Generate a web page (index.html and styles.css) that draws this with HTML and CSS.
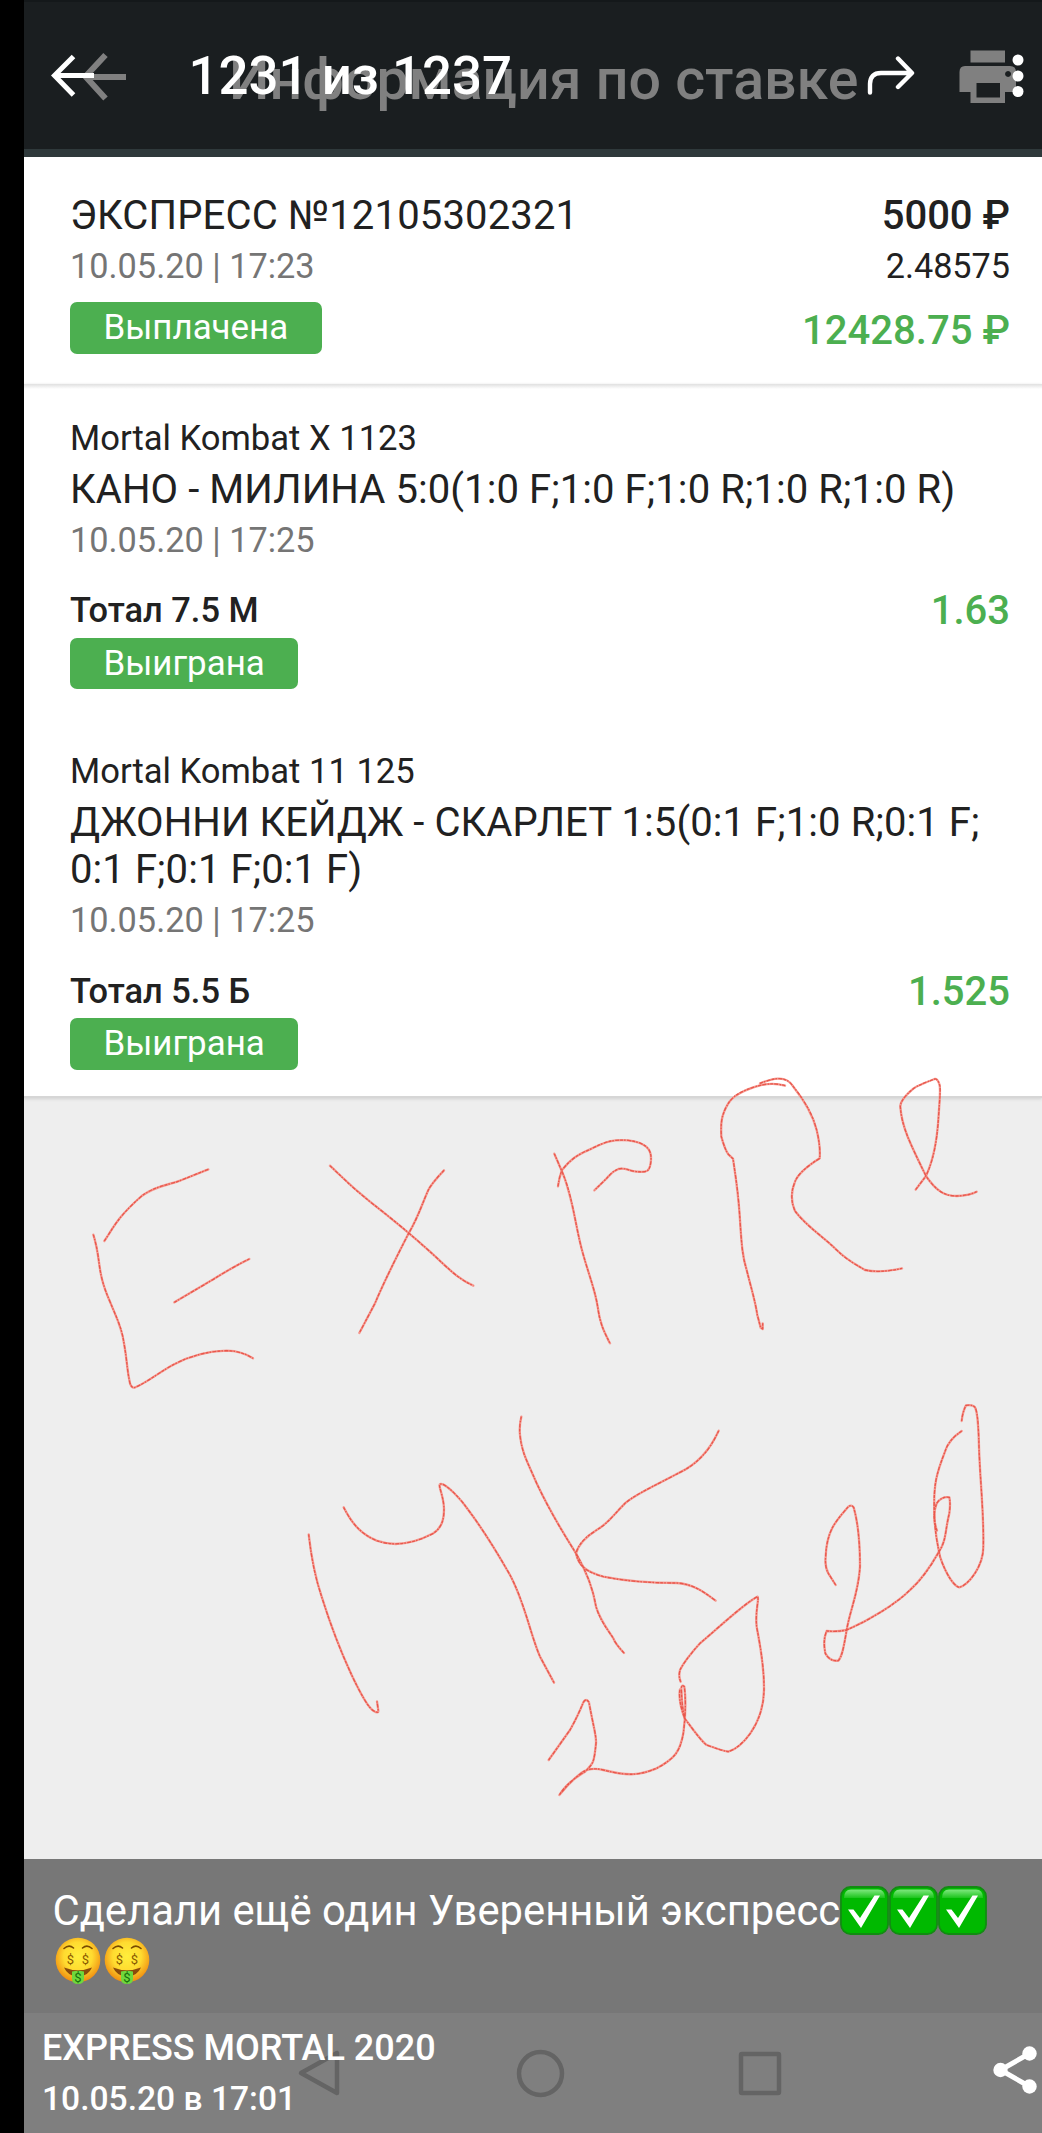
FILE: index.html
```html
<!DOCTYPE html>
<html lang="ru">
<head>
<meta charset="utf-8">
<title>1231 из 1237</title>
<link rel="stylesheet" href="styles.css">
</head>
<body>
<main class="viewer">
  <header class="topbar">
    <div class="layer layer-dim">
      <svg class="back-dim" width="46" height="50" viewBox="0 0 46 50"><path d="M45 25H5M24.500 3L4.500 24.500L24.500 46.500"/></svg>
      <h2 class="title-dim">Информация по ставке</h2>
      <svg class="printer" width="58" height="54" viewBox="0 0 58 54"><path fill-rule="evenodd" d="M11.500.500h34.500v12H11.500zM6 16h45q6 0 6 6v20H46v11H11.500V42H.500V22q0-6 5.500-6zM17.500 33v14.500h23.500V33zM49 21a3 3 0 1 0 .1 0z"/></svg>
    </div>
    <div class="layer layer-front">
      <svg class="back" width="44" height="44" viewBox="0 0 44 44"><path d="M43 21.500H4M22.500 2.500L3.500 21.500L22.500 41"/></svg>
      <h1 class="counter">1231 из 1237</h1>
      <svg class="forward" width="48" height="42" viewBox="0 0 48 42"><path d="M3 37.500V29Q3 18 14 18H44M31 3.500L45 18L31 32"/></svg>
      <svg class="dots" width="12" height="44" viewBox="0 0 12 44"><circle cx="6" cy="6" r="5.500"/><circle cx="6" cy="22" r="5.500"/><circle cx="6" cy="37.500" r="5.500"/></svg>
    </div>
  </header>

  <section class="bet">
    <div class="col">
      <div class="number">ЭКСПРЕСС №12105302321</div>
      <div class="date">10.05.20 | 17:23</div>
      <div class="badge">Выплачена</div>
    </div>
    <div class="col col-right">
      <div class="stake">5000 ₽</div>
      <div class="coef">2.48575</div>
      <div class="payout">12428.75 ₽</div>
    </div>
  </section>

  <section class="events">
    <article class="event">
      <div class="league">Mortal Kombat X 1123</div>
      <div class="match">КАНО - МИЛИНА 5:0(1:0 F;1:0 F;1:0 R;1:0 R;1:0 R)</div>
      <div class="date">10.05.20 | 17:25</div>
      <div class="pick"><span class="pick-name">Тотал 7.5 М</span><span class="odd">1.63</span></div>
      <div class="badge">Выиграна</div>
    </article>
    <article class="event">
      <div class="league">Mortal Kombat 11 125</div>
      <div class="match">ДЖОННИ КЕЙДЖ - СКАРЛЕТ 1:5(0:1 F;1:0 R;0:1 F;<br>0:1 F;0:1 F;0:1 F)</div>
      <div class="date">10.05.20 | 17:25</div>
      <div class="pick"><span class="pick-name">Тотал 5.5 Б</span><span class="odd">1.525</span></div>
      <div class="badge">Выиграна</div>
    </article>
  </section>

  <div class="blank"></div>

  <section class="caption">
    <div class="caption-row">
      <span>Сделали ещё один Уверенный экспресс</span>
      <svg width="49" height="49" viewBox="0 0 49 49">
        <defs>
          <linearGradient id="gloss" x1="0" y1="0" x2="0" y2="1"><stop offset="0" stop-color="#7fe87f"/><stop offset="1" stop-color="#1cc41c"/></linearGradient>
          <symbol id="check" viewBox="0 0 49 49">
            <rect x="1" y="1" width="47" height="47" rx="9.500" fill="#00b900" stroke="#128c12" stroke-width="1.800"/>
            <path d="M4 12Q4 3.500 11 3.500H38Q45 3.500 45 12Z" fill="url(#gloss)"/>
            <path d="M8 23.500H13.500L20 32L34.500 9.500H40L21 42Z" fill="#fff"/>
          </symbol>
        </defs>
        <use href="#check"/>
      </svg>
      <svg width="49" height="49"><use href="#check"/></svg>
      <svg width="49" height="49"><use href="#check"/></svg>
    </div>
    <div class="caption-row">
      <svg width="49" height="49" viewBox="0 0 49 49">
        <defs>
          <radialGradient id="skin" cx=".5" cy=".42" r=".58"><stop offset="0" stop-color="#ffee3c"/><stop offset=".55" stop-color="#ffdb30"/><stop offset="1" stop-color="#f08c10"/></radialGradient>
          <symbol id="money" viewBox="0 0 49 49">
            <circle cx="25" cy="24" r="22.300" fill="url(#skin)"/>
            <path d="M11 12.500Q16 8 20.500 12M29.500 12Q34 8 39 12.500" fill="none" stroke="#7a4a00" stroke-width="1.600" stroke-linecap="round"/>
            <path d="M11 31.500Q25 37 39 31.500Q35 40.500 25 40.500Q15 40.500 11 31.500Z" fill="#8a4a0c"/>
            <path d="M19 35.500Q25 34 31 35.500V43Q31 48 25 48Q19 48 19 43Z" fill="#6fd83c"/>
            <g class="dollar"><text x="17.500" y="27.500">$</text><text x="32.500" y="27.500">$</text><text x="25" y="46" fill="#14700c">$</text></g>
          </symbol>
        </defs>
        <use href="#money"/>
      </svg>
      <svg width="49" height="49"><use href="#money"/></svg>
    </div>
  </section>

  <footer class="footer">
    <svg class="nav" width="490" height="54" viewBox="0 0 490 54">
      <path d="M44 7V47L8 27Z"/><circle cx="247.500" cy="27.500" r="21.500"/><rect x="448" y="8" width="38" height="39" rx="1"/>
    </svg>
    <div class="meta">
      <div class="author">EXPRESS MORTAL 2020</div>
      <div class="time">10.05.20 в 17:01</div>
    </div>
    <svg class="share" width="44" height="48" viewBox="0 0 44 48"><path d="M36.500 7.500L7.500 24L36.500 40.500"/><circle cx="7.500" cy="24" r="7.200"/><circle cx="36.500" cy="7.500" r="7.200"/><circle cx="36.500" cy="40.500" r="7.200"/></svg>
  </footer>

  <svg class="scribble" width="1018" height="760" viewBox="24 1060 1018 760">
    <defs>
      <g id="ink">
        <g transform="translate(60 1060) scale(.33333)">
          <path d="M133 543C165 495 175 470 245 408C290 375 330 375 365 360L445 328"/>
          <path d="M100 524C125 605 108 630 150 725C170 775 185 800 192 850C202 905 200 925 210 970Q216 988 228 981C265 965 300 935 340 914C395 885 450 873 500 872Q545 873 579 895"/>
          <path d="M343 727L460 658Q520 620 568 597"/>
          <path d="M810 317C850 355 870 377 930 425C1000 480 1040 512 1110 575C1160 620 1190 655 1240 677"/>
          <path d="M1152 331Q1115 370 1105 390C1085 435 1075 470 1046 520C1005 600 970 670 945 730L898 819"/>
        </g>
        <g transform="translate(540 1060) scale(.33333)">
          <path d="M43 281L64 330C100 410 105 500 130 585C150 655 165 690 173 740C180 795 195 820 210 850"/>
          <path d="M54 379Q58 350 66 330C90 300 110 285 150 268C200 243 220 238 265 241C315 248 335 265 333 300C330 340 318 336 290 335C265 332 255 322 235 327C215 335 210 345 195 360L163 391"/>
          <path d="M735 77Q700 67 660 76C610 90 580 105 565 130C540 170 543 200 544 230Q555 270 565 283L579 296C590 370 595 400 600 480C605 560 608 590 620 630C635 690 645 720 652 765L662 803L668 807V790"/>
          <path d="M660 70Q700 55 715 56Q745 55 760 80C800 130 820 170 830 210Q842 260 839 295C800 320 775 340 765 365C750 400 755 430 765 453C800 500 850 530 890 570C920 600 950 615 975 630Q1020 640 1086 625"/>
          <path d="M1127 389Q1145 365 1158 348C1180 300 1190 250 1195 180C1200 100 1203 85 1198 72Q1192 55 1184 57C1150 70 1130 78 1120 86Q1080 120 1081 140C1085 200 1110 250 1158 348C1190 395 1215 408 1250 408Q1290 406 1310 395"/>
        </g>
        <g transform="translate(280 1380) scale(.33333)">
          <path d="M86 463C95 540 105 590 125 650C150 730 180 810 215 885Q260 980 280 992Q296 1002 295 992L291 964"/>
          <path d="M191 382C220 440 250 465 290 482C340 500 400 492 460 460C490 440 492 410 492 385C490 340 470 312 483 312C500 312 545 360 565 390C610 450 650 515 690 585C735 670 750 760 780 830L822 908"/>
          <path d="M724 110Q717 140 720 165C725 220 745 250 770 310C810 395 850 460 888 520C920 575 940 630 948 680C960 720 980 745 1000 775Q1005 790 1032 819"/>
          <path d="M1316 152C1290 210 1255 250 1200 277C1130 315 1070 340 1035 370C1000 405 985 430 950 450C910 475 895 495 888 520C895 555 915 575 970 590C1030 602 1100 609 1190 609C1240 612 1270 635 1307 662"/>
          <path d="M806 1140L870 1050Q895 1005 910 967Q918 953 927 967C940 1040 950 1070 948 1090C942 1150 940 1150 915 1175C890 1190 860 1210 838 1245Q870 1205 905 1178Q930 1160 970 1170C1050 1190 1080 1185 1130 1165C1185 1135 1200 1115 1210 1060C1218 1000 1217 950 1213 920Q1205 912 1204 925Q1206 985 1214 1015"/>
          <path d="M1202 905Q1195 890 1200 870Q1215 840 1260 790C1330 730 1400 665 1433 650C1438 660 1425 690 1430 740C1435 770 1453 850 1452 930C1450 1040 1380 1105 1345 1115Q1330 1113 1280 1095C1265 1085 1240 1050 1214 1015Q1194 960 1200 928"/>
        </g>
        <g transform="translate(680 1380) scale(.33333)">
          <path d="M467 615L445 580Q434 560 437 530C440 450 470 420 505 380Q515 373 521 382C535 430 540 500 540 560C535 640 510 690 500 750C490 810 485 830 475 842Q450 845 436 820Q428 780 440 753Q470 756 500 750C570 720 650 670 690 630C730 595 760 545 777 515C800 480 795 450 808 400Q812 370 808 352Q785 348 770 370Q755 410 771 452"/>
          <path d="M845 153Q805 180 795 215C770 280 760 310 763 400C765 470 775 500 780 530C800 590 825 620 838 622C865 615 910 560 910 500C912 400 900 300 897 200C895 120 892 95 885 82Q878 73 858 76Q848 95 845 123"/>
        </g>
      </g>
    </defs>
    <use href="#ink" class="ink-soft"/>
    <use href="#ink" class="ink-grain"/>
  </svg>
</main>
</body>
</html>
```
FILE: styles.css
```css
* { box-sizing: border-box; margin: 0; }
body { background: #000; font-family: Roboto, sans-serif; }
svg { display: block; flex: none; fill: none; }

.viewer {
  position: relative;
  display: flex;
  flex-direction: column;
  height: 2133px;
  margin-left: 24px;
  overflow: hidden;
  background: #eee;
}

/* Viewer controls lie over the picture's own dimmed title bar */
.topbar {
  position: relative;
  flex: none;
  height: 157px;
  background: #1a1e20;
  border-top: 2px solid #14181a;
  border-bottom: 8px solid #2f393b;
}
.layer {
  position: absolute;
  left: 0;
  right: 0;
  top: 0;
  display: flex;
  align-items: center;
  white-space: nowrap;
}
.layer-dim { height: 150px; padding-left: 57px; color: #808080; }
.layer-front { height: 147px; padding-left: 27px; color: #fff; }
.back-dim { stroke: #808080; stroke-width: 6; }
.title-dim { flex: none; width: 832px; padding: 5px 0 0 102px; font-size: 57.3px; line-height: 68px; font-weight: 500; }
.printer { fill: #808080; }
.back { stroke: #fff; stroke-width: 5; }
.counter { flex: none; width: 772px; padding-left: 93.5px; font-size: 52.8px; line-height: 62px; font-weight: 500; }
.forward { stroke: #fff; stroke-width: 4.4; stroke-linecap: round; stroke-linejoin: round; }
.dots { margin-left: 96.5px; fill: #fff; }

.bet {
  display: flex;
  flex: none;
  justify-content: space-between;
  height: 227px;
  padding: 35px 32px 0 46px;
  background: #fff;
  color: #212121;
}
.col { display: flex; flex-direction: column; align-items: flex-start; }
.col-right { align-items: flex-end; }
.number, .match { font-size: 40px; line-height: 47px; letter-spacing: .08px; }
.number { letter-spacing: .15px; }
.date { margin-top: 7px; font-size: 34.3px; line-height: 41px; color: #757575; }
.coef { margin-top: 7px; font-size: 34.2px; line-height: 41px; }
.stake, .payout, .odd { font-size: 40px; line-height: 47px; font-weight: 500; }
.payout { margin-top: 20px; font-size: 40.1px; }
.payout, .odd { color: #4caf50; }
.badge {
  width: fit-content;
  margin-top: 15px;
  padding: 0 33.5px;
  border-radius: 7px;
  background: #4caf50;
  color: #fff;
  font-size: 34.9px;
  line-height: 51.5px;
}

.events {
  display: flex;
  flex: none;
  flex-direction: column;
  height: 714px;
  background: linear-gradient(#e0e0e0, #fff 5px);
  border-bottom: 2px solid #d6d6d6;
  box-shadow: 0 1px 3px #d0d0d0;
  color: #212121;
}
.event { padding: 33.500px 32px 0 46px; }
.event + .event { padding-top: 62px; }
.league { font-size: 34.6px; line-height: 41px; }
.match { margin-top: 7px; white-space: nowrap; }
.pick { display: flex; align-items: center; justify-content: space-between; margin-top: 26px; height: 47px; }
.pick-name { font-size: 34.4px; font-weight: 500; }
.odd { padding-top: 1px; }
.event .badge { margin-top: 4px; }

.blank { flex: 1; }

.caption { flex: none; height: 154px; padding: 26.5px 0 0 28.5px; background: #777; color: #fff; font-size: 41.75px; }
.caption-row { display: flex; align-items: center; height: 50px; white-space: nowrap; }
.dollar { font-size: 13px; fill: #8a5a00; text-anchor: middle; }

.footer {
  position: relative;
  display: flex;
  flex: none;
  justify-content: space-between;
  height: 120px;
  padding: 12px 5px 0 18px;
  background: #7f7f7f;
  color: #fff;
}
.nav { position: absolute; left: 269px; top: 33px; stroke: #646464; stroke-width: 4.500; stroke-linejoin: round; }
.meta { position: relative; font-weight: 500; }
.author { font-size: 36px; line-height: 46px; }
.time { margin-top: 5px; font-size: 33.6px; line-height: 46px; }
.share { margin-top: 21px; fill: #fff; stroke: #fff; }
.share path { fill: none; stroke-width: 5; }
.share circle { stroke: none; }

.scribble { position: absolute; left: 0; top: 1060px; stroke-linecap: round; stroke-linejoin: round; }
.ink-soft { stroke: #f59b92; stroke-width: 7; }
.ink-grain { stroke: #e8574c; stroke-width: 4; stroke-linecap: butt; stroke-dasharray: 9 3 5 4 12 3; }
```
